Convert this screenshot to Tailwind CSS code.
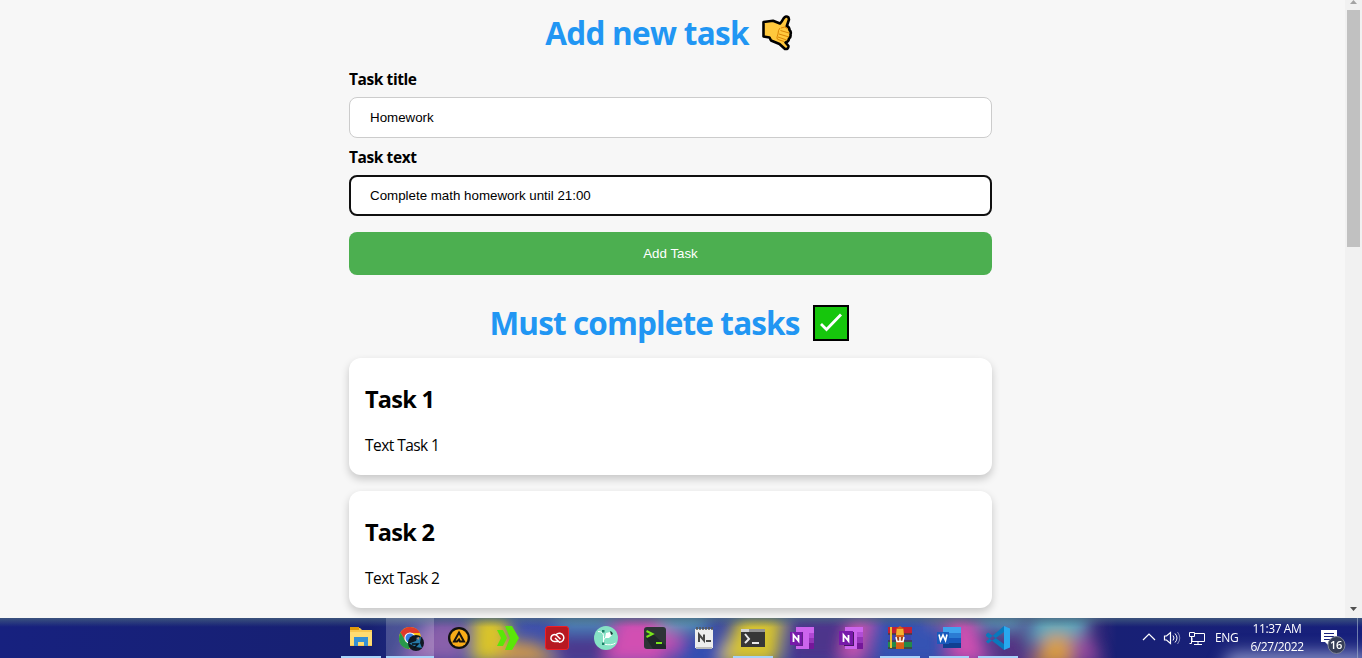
<!DOCTYPE html>
<html lang="en">
<head>
<meta charset="utf-8">
<title>Tasks</title>
<script src="https://cdn.jsdelivr.net/npm/@tailwindcss/browser@4"></script>
</head>
<body class="flex h-[658px] w-[1362px] flex-col overflow-hidden bg-[#f7f7f7] font-['Open_Sans','Noto_Sans',sans-serif] text-black">
<div class="flex h-[618px] shrink-0 overflow-hidden">
  <main class="w-[1345px] pl-[349px]">
    <div class="w-[643px]">
      <h1 class="flex h-[66px] items-center justify-center gap-[13px] pr-[3px] text-[31.500px] font-bold leading-none tracking-[-0.7px] text-[#2196f3]">
        <span class="whitespace-nowrap">Add new task</span>
        <svg class="h-9 w-[31px]" viewBox="0 0 31 36"><path d="M1.500 7 11 5.800 18 8.500Q20 6.500 21.500 3.500 24 0 26.500 2.500L27 4.500 24.800 11Q27.500 12 27.500 15 29.500 17 28.500 19.500 29 22.500 27 23.500 27 26.500 23.500 27.500L26.500 31Q26.500 34.500 23 34L17.500 29 9 25.500 7.500 22.500 1.500 21.500Z" fill="#ffc83d" stroke="#000" stroke-width="2.600" stroke-linejoin="round"/><path d="M19 13Q23 10.500 26 14M18 13Q16 15 16 19 14 24 16 24.500L22 26.500M18.500 15.500 27 18M17 19 27 22M16 22 24.500 25" fill="none" stroke="#d67d00" stroke-width=".9"/></svg>
      </h1>
      <label class="block h-[31px] pt-px text-[15.500px] font-bold leading-6 tracking-[-0.42px]"><span>Task title</span></label>
      <div class="flex h-[41px] items-center rounded-lg border border-[#ccc] bg-white pl-5 font-['Liberation_Sans',sans-serif] text-[13.333px]"><span>Homework</span></div>
      <label class="block h-[37px] pt-[7px] text-[15.500px] font-bold leading-6 tracking-[-0.42px]"><span>Task text</span></label>
      <div class="flex h-[41px] items-center rounded-lg border-2 border-[#101010] bg-white pl-[19px] font-['Liberation_Sans',sans-serif] text-[13.333px]"><span>Complete math homework until 21:00</span></div>
      <button class="mt-4 block h-[43px] w-full rounded-lg bg-[#4caf50] font-['Liberation_Sans',sans-serif] text-[13.333px] text-white"><span>Add Task</span></button>
      <h1 class="mt-[25px] flex h-[46px] items-center justify-center gap-[13px] pr-[3px] text-[31.500px] font-bold leading-none tracking-[-0.88px] text-[#2196f3]">
        <span class="whitespace-nowrap">Must complete tasks</span>
        <svg class="h-9 w-9" viewBox="0 0 36 36"><path d="M0 0h36v36H0z"/><path fill="#16c60c" d="M2 2h32v32H2z"/><path d="m8 19 5.500 5.500L28 9.500" fill="none" stroke="#fff" stroke-width="2.800"/></svg>
      </h1>
      <section class="mt-[12px] h-[117px] rounded-xl bg-white px-4 pt-[25px] shadow-[0_4px_8px_rgba(0,0,0,0.2)]">
        <h2 class="text-[23.500px] font-bold leading-8 tracking-[-0.75px]"><span>Task 1</span></h2>
        <p class="mt-[18px] text-[15.500px] leading-6 tracking-[-0.55px]"><span>Text Task 1</span></p>
      </section>
      <section class="mt-4 h-[117px] rounded-xl bg-white px-4 pt-[25px] shadow-[0_4px_8px_rgba(0,0,0,0.2)]">
        <h2 class="text-[23.500px] font-bold leading-8 tracking-[-0.75px]"><span>Task 2</span></h2>
        <p class="mt-[18px] text-[15.500px] leading-6 tracking-[-0.55px]"><span>Text Task 2</span></p>
      </section>
    </div>
  </main>
  <aside class="flex w-[17px] flex-col items-center justify-between bg-[#f1f1f1]">
    <div class="flex flex-col items-center">
      <svg class="h-[10px] w-[17px]" viewBox="0 0 17 10"><path d="M5 4h7L8.500 0z" fill="#a3a3a3"/></svg>
      <div class="h-[237px] w-[13px] bg-[#c1c1c1]"></div>
    </div>
    <svg class="h-[17px] w-[17px]" viewBox="0 0 17 17"><path d="M5 6h7l-3.500 4z" fill="#505050"/></svg>
  </aside>
</div>

<footer class="relative flex h-10 shrink-0 overflow-hidden bg-[#17207c] pl-[336px] font-['Open_Sans',sans-serif] text-white">
  <svg class="absolute inset-0 h-10 w-[1362px]" viewBox="0 0 1362 40">
    <defs>
      <filter id="soft" x="-30%" y="-100%" width="160%" height="300%"><feGaussianBlur stdDeviation="8"/></filter>
      <linearGradient id="edge" x2="0" y2="1"><stop stop-color="#4b697f" stop-opacity=".7"/><stop offset="1" stop-color="#4b697f" stop-opacity="0"/></linearGradient>
      <linearGradient id="base"><stop stop-color="#17217f"/><stop offset=".27" stop-color="#172071"/><stop offset=".32" stop-color="#26318b"/><stop offset=".37" stop-color="#3f52ae"/><stop offset=".7" stop-color="#343d94"/><stop offset=".78" stop-color="#603681"/><stop offset=".82" stop-color="#182075"/><stop offset="1" stop-color="#17207c"/></linearGradient>
    </defs>
    <path fill="url(#base)" d="M0 0h1362v40H0z"/>
    <g filter="url(#soft)">
      <path fill="#bd58b4" opacity=".6" d="M418 12l24 3-4 30h-40z"/><path fill="#8960aa" d="M425 0h40v45h-40z"/>
      <path fill="#d9c42c" d="M472-5h35l3 30-14 20h-25z"/>
      <path fill="#d89c45" d="M500 30q35-17 58 15h-60z"/>
      <path fill="#5492b8" d="M552-10h58v21h-50z"/>
      <path fill="#4d388b" d="M552 20h60v25h-52z"/>
      <path fill="#d24fb2" d="M617-4h44l5 50h-62z"/><path fill="#d24fb2" d="M661 15h20l7 16-20 4z"/>
      <path fill="#5aa4bd" d="M660-10h47v21h-47z"/><path fill="#3450b2" d="M680 22h48v26h-55z"/>
      <path fill="#d8c52d" d="M739-4h45l-7 50h-58z"/>
      <path fill="#4e358b" d="M790-5h60l-10 50h-51z"/><path fill="#c654b0" d="M852-4h22l-10 49h-25z"/>
      <path fill="#3453b3" d="M874-4h70v50h-70z"/><path fill="#78638e" d="M928-10h42v18h-42z"/>
      <path fill="#ce50b1" d="M950 0h24l16 45h-42z"/><path fill="#5b9fbd" d="M978-10h45v20h-43z"/><path fill="#543483" d="M1002 14h24v32h-30z"/>
      <path fill="#56a8bd" d="M1034-8h60l-15 33h-51z"/><path fill="#d89b43" d="M1048 16l22 2 3 30h-42z"/><path fill="#954a9e" d="M1073 20l15-6 13 31h-28z"/>
      <path fill="#919acb" opacity=".9" d="M1230 34h140v20h-150z"/>
    </g>
    <path fill="url(#edge)" d="M0 0h1362v9H0z"/>
    <path fill="#9eaec8" d="M1357 0h1v40h-1z" opacity=".65"/>
  </svg>
  <nav class="relative flex w-[686px] shrink-0">
    <div class="flex w-[50px] flex-col items-center justify-between pt-2"><svg class="h-6 w-6" viewBox="0 0 24 24"><path d="M1 2h10l2 2h10v16H1z" fill="#f9c850"/><path d="M1 1h9v3H1z" fill="#e19a09"/><path d="M1 6h22v13H1z" fill="#ffdc72"/><path d="M5 11h14v9h-4v-4H9v4H5z" fill="#3690d5"/></svg><i class="h-0.5 w-10 bg-[#a7d3fa]"></i></div>
    <div class="flex w-[48px] flex-col items-center justify-between bg-white/20 pt-2"><svg class="h-6 w-6 overflow-visible" viewBox="0 0 24 24"><circle cx="12" cy="12" r="11" fill="#fbc116"/><path d="M2.500 6.500Q6 1 12 1q7 0 10 6H12l-4 9z" fill="#df392b"/><path d="M2.500 6.500Q-1 14 3 19q4 4 8 4l4-7H8z" fill="#28984b"/><circle cx="12" cy="12" r="5.600" fill="#fff"/><circle cx="12" cy="12" r="4.500" fill="#367ee6"/><circle cx="18" cy="17" r="8" fill="#101922"/><path d="M11 17.500l7-2.500 1-3 4-1-1 6 2 5-6-1z" fill="#277aa8"/><path d="M14 18h6l-4 4" stroke="#061018" fill="none" stroke-width="1.500"/><path d="m18 12 3-1v3" fill="#ad8778"/></svg><i class="h-0.5 w-full bg-[#a7d3fa]"></i></div>
    <div class="flex w-[50px] justify-center pt-2"><svg class="h-6 w-6" viewBox="0 0 24 24"><circle cx="12" cy="12" r="11" fill="#111"/><circle cx="12" cy="12" r="8.700" fill="#f9ac18"/><path d="m12 6.500 5 9h-4l-1-2-2 2H7z" fill="none" stroke="#17130e" stroke-width="2"/></svg></div>
    <div class="flex w-[48px] justify-center pt-2"><svg class="h-6 w-6" viewBox="0 0 24 24"><path d="M1 4h6l4 8-4 8H1l4-8zM9 0h7l7 12-7 12H9l5-12z" fill="#5ae707"/></svg></div>
    <div class="flex w-[49px] justify-center pt-2"><svg class="h-6 w-6" viewBox="0 0 24 24"><rect x=".5" y=".5" width="23" height="23" rx="2.500" fill="#b71922" stroke="#ee2027"/><path d="M13 15.500H9.500a3.500 3.500 0 1 1 2-6.300l4 4M11 8.700a4.500 4.500 0 1 1 3.500 7.500L10 12" fill="none" stroke="#fff" stroke-width="1.500"/></svg></div>
    <div class="flex w-[49px] justify-center pt-2"><svg class="h-6 w-6" viewBox="0 0 24 24"><circle cx="12" cy="12" r="12" fill="#86e2c5"/><path d="M4 5.500q5 0 5.500 4V18q8 2 12-1M9.500 14q3-4 5-5" fill="none" stroke="#fff"/><path d="m11 12 1-5 4-1 2 3-3 3z" fill="#fff"/><path d="m16 5 2 1 1 2-2 1z" fill="#173b36"/><path d="M8 4h2.500v2.500H8zm0 12.500h2.500V19H8z" fill="#1c8068"/></svg></div>
    <div class="flex w-[49px] justify-center pt-2"><svg class="h-6 w-6" viewBox="0 0 24 24"><rect x="1" y="1" width="22" height="22" rx="3" fill="#2e3437"/><path d="M10 8l13 12v3H10L3 12z" fill="#21272a"/><path d="m3.500 5 6 3-6 3M13 17h6" fill="none" stroke="#79e51b" stroke-width="2"/></svg></div>
    <div class="flex w-[49px] justify-center pt-2"><svg class="h-6 w-6" viewBox="0 0 24 24"><path d="M3 3h18v19H3z" fill="#ededed"/><path d="M4 22h16" stroke="#bbb" stroke-width="2"/><path d="M5 1v3M8 1v3M11 1v3M14 1v3M17 1v3M20 1v3" stroke="#555" stroke-width="1.500"/><path d="M7 16V8.500l5 6v-6M14 15h5" fill="none" stroke="#474747" stroke-width="2"/></svg></div>
    <div class="flex w-[49px] flex-col items-center justify-between pt-2"><svg class="h-6 w-6" viewBox="0 0 24 24"><path d="M0 3h24v18H0z" fill="#373737"/><path d="M0 3h24v3H0z" fill="#929292"/><path d="M0 3h8v3H0z" fill="#d2d2d2"/><path d="m4 8 4 5-4 4M11 17h7" fill="none" stroke="#e9e9e9" stroke-width="2"/></svg><i class="h-0.5 w-10 bg-[#a7d3fa]"></i></div>
    <div class="flex w-[49px] justify-center pt-2"><svg class="h-6 w-6" viewBox="0 0 24 24"><path d="M6 1h18v22H6z" fill="#cc65ed"/><path d="M19 7h5v5h-5z" fill="#af47d3"/><path d="M19 12h5v5h-5z" fill="#9334b8"/><path d="M19 17h5v6h-5z" fill="#75179a"/><path d="M0 6h12v13H0z" fill="#7719aa"/><path d="M12 6h1v14H5v-1h7z" fill="#64208d"/><path d="M3.500 16V9l5 6V9" fill="none" stroke="#fff" stroke-width="1.800"/></svg></div>
    <div class="flex w-[49px] justify-center pt-2"><svg class="h-6 w-6" viewBox="0 0 24 24"><path d="M6 1h18v22H6z" fill="#cc65ed"/><path d="M18 6h6v5h-6z" fill="#b24dd6"/><path d="M18 11h6v6h-6z" fill="#9334b8"/><path d="M18 17h6v6h-6z" fill="#75179a"/><path d="M0 5h14v14H0z" fill="#7719aa"/><path d="M14 6h1v14H5v-1h9z" fill="#461662"/><path d="M4.500 16V9l5 6V9" fill="none" stroke="#fff" stroke-width="1.800"/></svg></div>
    <div class="flex w-[49px] flex-col items-center justify-between pt-2"><svg class="h-6 w-6" viewBox="0 0 24 24"><path d="M0 1h24v7H0z" fill="#c22135"/><path d="M1 9h22v6H1z" fill="#4045ad"/><path d="M0 16h24v7H0z" fill="#238b48"/><path d="M0 8h24M0 15h24M0 22h24" stroke="#463b44" stroke-width="1.500"/><path d="M2 1h2v21H2z" fill="#e9bd33"/><path d="M8 3l4-3 4 3v20H8z" fill="#d75f16"/><path d="M9 3h6l1 6H8z" fill="#f3b332"/><path d="M8 11h8v5H8z" fill="#9c431e"/><path d="m8 11 1 4.500h6l1-4.500M12 11v4" fill="none" stroke="#fff" stroke-width="1.500"/></svg><i class="h-0.5 w-10 bg-[#a7d3fa]"></i></div>
    <div class="flex w-[49px] flex-col items-center justify-between pt-2"><svg class="h-6 w-6" viewBox="0 0 24 24"><path d="M6 1h18v6H6z" fill="#40a3ee"/><path d="M6 7h18v5H6z" fill="#2b7cd3"/><path d="M6 12h18v5H6z" fill="#185abd"/><path d="M6 17h18v5H6z" fill="#103f91"/><path d="M0 6h12v12H0z" fill="#185abd"/><path d="m2 8.500 1.500 6L6 9l2.500 5.500L10 8.500" fill="none" stroke="#fff" stroke-width="1.600"/></svg><i class="h-0.5 w-10 bg-[#a7d3fa]"></i></div>
    <div class="flex w-[49px] flex-col items-center justify-between pt-2"><svg class="h-6 w-6" viewBox="0 0 24 24"><path d="m0 8.500 2-2 16 11.500v6L0 10zM0 15.500l2 2L18 6V0z" fill="#0879bd"/><path d="m18 0 6 2.500v19L18 24z" fill="#29a8ef"/></svg><i class="h-0.5 w-10 bg-[#a7d3fa]"></i></div>
  </nav>
  <div class="relative ml-[120px] flex h-10 items-center">
    <svg class="h-6 w-[66px]" viewBox="0 0 66 24" fill="none" stroke="#fff"><path d="m1 14 6-6 6 6M22.500 10h2l4-3.500v11L24.500 14h-2z" stroke-width="1.200"/><path d="M31 9.500q2 2.500 0 5M33 7.500q4 4.500 0 9"/><path d="M35.500 6q4.500 6 0 12" opacity=".5"/><path d="M52 7.500h10.500v8H50v-4M56 15.500v3M52 18.500h8M47.500 6.500h5v4h-5zM49.500 10.500v7h-2"/></svg>
    <span class="ml-[7px] w-[25px] text-xs tracking-[-0.4px]">ENG</span>
    <div class="ml-[6px] flex w-[62px] flex-col text-center text-xs leading-[18px] tracking-[-0.4px]"><span class="whitespace-nowrap">11:37 AM</span><span class="whitespace-nowrap">6/27/2022</span></div>
    <div class="relative ml-3 h-6 w-7">
      <svg class="h-6 w-7 overflow-visible" viewBox="0 0 28 24"><path d="M1 4h16v12H9v4l-4-4H1z" fill="#fff"/><path d="M4 7.500h10M4 10.500h10M4 13.500h6" stroke="#17207c"/><circle cx="16.500" cy="19" r="8.500" fill="#363e57" stroke="#7d8394"/></svg>
      <span class="absolute left-2 top-[11px] w-4 text-center text-[11px] font-semibold leading-4 tracking-[-0.3px]">16</span>
    </div>
  </div>
</footer>
</body>
</html>
